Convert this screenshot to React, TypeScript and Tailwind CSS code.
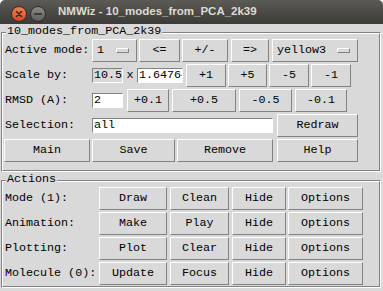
import React from "react";

const raised = "border border-t-white border-l-white border-b-[#828282] border-r-[#828282] bg-[#d9d9d9]";

function Btn({ label, cls }: { label: string; cls: string }) {
  return (
    <div className={`${raised} h-[23px] shrink-0 flex items-center justify-center ${cls}`}>
      <span className="leading-none">{label}</span>
    </div>
  );
}

function MenuBtn({ label, cls }: { label: string; cls: string }) {
  return (
    <div className={`${raised} h-[23px] shrink-0 flex items-center justify-between pl-[4px] pr-[7px] ${cls}`}>
      <span className="leading-none">{label}</span>
      <div className="w-[13px] h-[5px] border border-t-white border-l-white border-b-[#828282] border-r-[#828282] bg-[#d9d9d9]" />
    </div>
  );
}

function Entry({ value, cls, white = true }: { value: string; cls: string; white?: boolean }) {
  return (
    <div
      className={`h-[15px] shrink-0 overflow-hidden whitespace-nowrap border border-t-[#828282] border-l-[#828282] border-b-white border-r-white flex items-center pl-[1px] ${white ? "bg-white" : "bg-[#d9d9d9]"} ${cls}`}
    >
      <span className="leading-none">{value}</span>
    </div>
  );
}

function Label({ text, cls }: { text: string; cls: string }) {
  return <div className={`shrink-0 pl-[2px] whitespace-nowrap leading-none ${cls}`}>{text}</div>;
}

function Frame({ title, children, cls }: { title: string; children: React.ReactNode; cls: string }) {
  return (
    <div className={`relative ml-[1px] w-[380px] border border-t-[#828282] border-l-[#828282] border-b-white border-r-white ${cls}`}>
      <div className="border border-t-white border-l-white border-b-[#828282] border-r-[#828282]">{children}</div>
      <div className="absolute left-[4px] top-[-7px] bg-[#d9d9d9] px-[1px] leading-none">{title}</div>
    </div>
  );
}

export default function App() {
  return (
    <div
      className="w-[383px] h-[291px] overflow-hidden bg-white text-black text-[11.7px]"
      style={{ fontFamily: '"Liberation Mono", monospace' }}
    >
      {/* title bar */}
      <div className="h-[24px] rounded-t-[5px] bg-gradient-to-b from-[#5b5a54] to-[#3c3b37] flex items-center relative">
        <div className="absolute left-[11px] top-[6px] w-[16px] h-[16px] rounded-full bg-gradient-to-b from-[#f57f4f] to-[#d9471b] border border-[#2e2d2a] flex items-center justify-center">
          <svg width="8" height="8" viewBox="0 0 8 8">
            <path d="M1.5 1.5 L6.5 6.5 M6.5 1.5 L1.5 6.5" stroke="#3a2520" strokeWidth="1.6" strokeLinecap="round" />
          </svg>
        </div>
        <div className="absolute left-[30px] top-[6px] w-[16px] h-[16px] rounded-full bg-gradient-to-b from-[#8e8c85] to-[#5f5d57] border border-[#2e2d2a] flex items-center justify-center">
          <div className="w-[8px] h-[2px] bg-[#3c3b37] rounded-[1px]" />
        </div>
        <div
          className="absolute left-[58px] top-[6px] text-[11.5px] font-bold text-[#dfdbd2] leading-none whitespace-nowrap"
          style={{ fontFamily: '"Liberation Sans", Arial, sans-serif' }}
        >
          NMWiz - 10_modes_from_PCA_2k39
        </div>
      </div>

      <div className="bg-[#d9d9d9] h-[267px] pt-[8px]">
        <Frame title="10_modes_from_PCA_2k39" cls="">
          <div className="pt-[5px] pb-[8px] flex flex-col gap-[2px]">
            {/* row 1 */}
            <div className="flex items-center h-[23px]">
              <Label text="Active mode:" cls="w-[89px]" />
              <MenuBtn label="1" cls="w-[45px]" />
              <Btn label="<=" cls="w-[41px] ml-[2px]" />
              <Btn label="+/-" cls="w-[46px] ml-[2px]" />
              <Btn label="=>" cls="w-[38px] ml-[3px]" />
              <MenuBtn label="yellow3" cls="w-[86px] ml-[3px]" />
            </div>
            {/* row 2 */}
            <div className="flex items-center h-[23px]">
              <Label text="Scale by:" cls="w-[89px]" />
              <Entry value="10.58" cls="w-[31px]" white={false} />
              <div className="w-[14px] shrink-0 text-center leading-none">x</div>
              <Entry value="1.64764" cls="w-[46px]" />
              <Btn label="+1" cls="w-[40px] ml-[3px]" />
              <Btn label="+5" cls="w-[39px] ml-[2px]" />
              <Btn label="-5" cls="w-[40px] ml-[2px]" />
              <Btn label="-1" cls="w-[40px] ml-[2px]" />
            </div>
            {/* row 3 */}
            <div className="flex items-center h-[23px]">
              <Label text="RMSD (A):" cls="w-[89px]" />
              <Entry value="2" cls="w-[31px]" />
              <Btn label="+0.1" cls="w-[42px] ml-[4px]" />
              <Btn label="+0.5" cls="w-[64px] ml-[3px]" />
              <Btn label="-0.5" cls="w-[53px] ml-[3px]" />
              <Btn label="-0.1" cls="w-[52px] ml-[3px]" />
            </div>
            {/* row 4 */}
            <div className="flex items-center h-[23px]">
              <Label text="Selection:" cls="w-[89px]" />
              <Entry value="all" cls="w-[181px]" />
              <Btn label="Redraw" cls="w-[81px] ml-[4px]" />
            </div>
            {/* row 5 */}
            <div className="flex items-center h-[23px]">
              <Btn label="Main" cls="w-[86px] ml-[1px]" />
              <Btn label="Save" cls="w-[83px] ml-[2px]" />
              <Btn label="Remove" cls="w-[96px] ml-[2px]" />
              <Btn label="Help" cls="w-[81px] ml-[4px]" />
            </div>
          </div>
        </Frame>

        <Frame title="Actions" cls="mt-[8px]">
          <div className="pt-[5px] pb-[1px] flex flex-col gap-[2px]">
            {[
              ["Mode (1):", "Draw", "Clean"],
              ["Animation:", "Make", "Play"],
              ["Plotting:", "Plot", "Clear"],
              ["Molecule (0):", "Update", "Focus"],
            ].map(([l, a, b]) => (
              <div key={l} className="flex items-center h-[23px]">
                <Label text={l} cls="w-[96px]" />
                <Btn label={a} cls="w-[68px]" />
                <Btn label={b} cls="w-[59px] ml-[3px]" />
                <Btn label="Hide" cls="w-[54px] ml-[3px]" />
                <Btn label="Options" cls="w-[75px] ml-[2px]" />
              </div>
            ))}
          </div>
        </Frame>
      </div>
    </div>
  );
}
